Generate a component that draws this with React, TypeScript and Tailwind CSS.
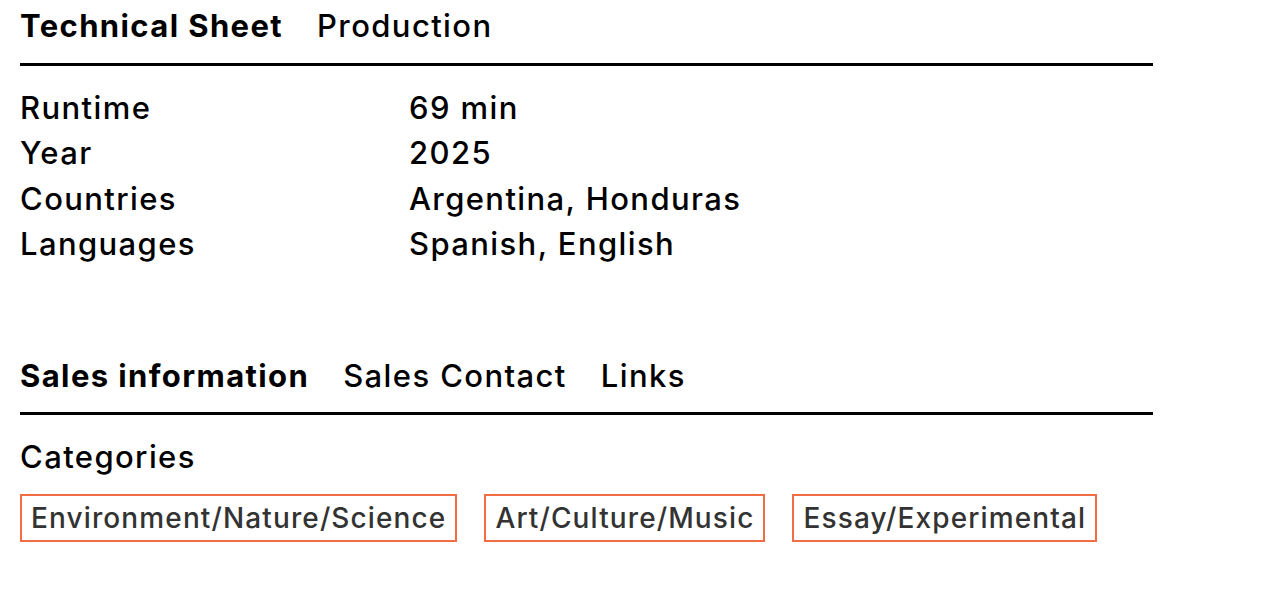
const specs = [
  { label: "Runtime", value: "69 min" },
  { label: "Year", value: "2025" },
  { label: "Countries", value: "Argentina, Honduras" },
  { label: "Languages", value: "Spanish, English" },
];

const categories = ["Environment/Nature/Science", "Art/Culture/Music", "Essay/Experimental"];

function Tabs({ items, pad }: { items: string[]; pad: string }) {
  return (
    <div className={`flex items-end gap-[34px] border-b-[3px] border-black ${pad}`}>
      {items.map((t, i) => (
        <button
          key={t}
          className={`text-[31px] leading-[36px] tracking-[0.045em] text-black ${i === 0 ? "font-bold" : "font-medium"}`}
        >
          {t}
        </button>
      ))}
    </div>
  );
}

export default function App() {
  return (
    <div
      className="min-h-screen bg-white pl-5 pt-[8px] text-black"
      style={{ fontFamily: "Inter, 'Noto Sans', sans-serif" }}
    >
      <div className="w-[1133px]">
        <Tabs items={["Technical Sheet", "Production"]} pad="pb-[19px]" />
        <dl className="mt-[19px]">
          {specs.map((s) => (
            <div key={s.label} className="flex text-[31px] font-medium leading-[45.3px] tracking-[0.045em]">
              <dt className="w-[389px]">{s.label}</dt>
              <dd>{s.value}</dd>
            </div>
          ))}
        </dl>

        <div className="mt-[92px]">
          <Tabs items={["Sales information", "Sales Contact", "Links"]} pad="pb-[18px]" />
        </div>
        <h3 className="mt-[19px] text-[31px] font-medium leading-[45.3px] tracking-[0.045em]">Categories</h3>
        <div className="mt-[15px] flex gap-[27px]">
          {categories.map((c) => (
            <span
              key={c}
              className="border-2 border-[#f26c45] px-[9px] text-[28px] font-medium leading-[44px] tracking-[0.04em] text-[#333333]"
            >
              {c}
            </span>
          ))}
        </div>
      </div>
    </div>
  );
}
